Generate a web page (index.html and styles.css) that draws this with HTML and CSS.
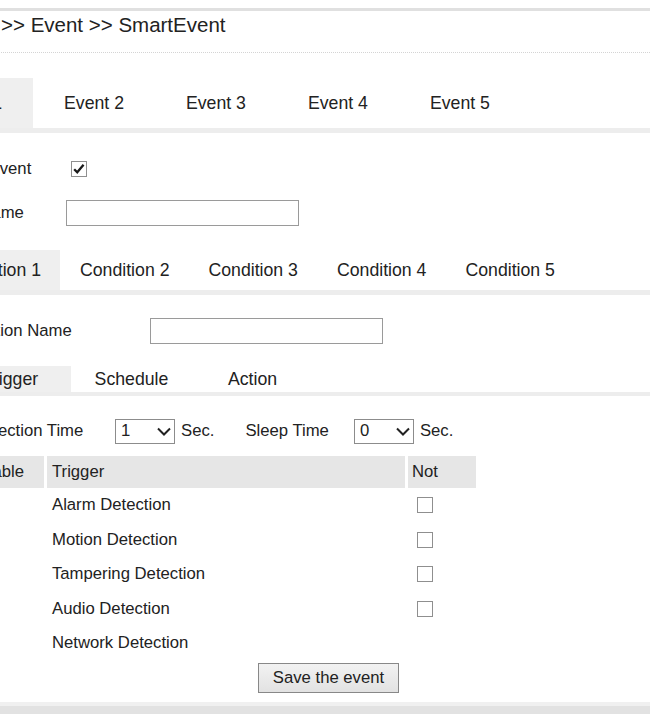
FILE: index.html
```html
<!DOCTYPE html>
<html>
<head>
<meta charset="utf-8">
<link rel="stylesheet" href="styles.css">
</head>
<body>
<div class="page">
  <div class="crumb">&gt;&gt; Event &gt;&gt; SmartEvent</div>

  <div class="tabs tabs-event">
    <span class="tab active">Event 1</span>
    <span class="tab">Event 2</span>
    <span class="tab">Event 3</span>
    <span class="tab">Event 4</span>
    <span class="tab">Event 5</span>
  </div>

  <div class="form form-event">
    <div class="row"><span class="lbl">Enable Event</span>
      <span class="cb cb-on"><svg viewBox="0 0 16 16" width="14" height="14"><path d="M2.5 8.2 L6 11.8 L13.2 3.2" fill="none" stroke="#1a1a1a" stroke-width="2.6"/></svg></span>
    </div>
    <div class="row"><span class="lbl">Event Name</span><span class="txt"></span></div>
  </div>

  <div class="tabs tabs-cond">
    <span class="tab active">Condition 1</span>
    <span class="tab">Condition 2</span>
    <span class="tab">Condition 3</span>
    <span class="tab">Condition 4</span>
    <span class="tab">Condition 5</span>
  </div>

  <div class="form form-cond">
    <div class="row"><span class="lbl">Condition Name</span><span class="txt"></span></div>
  </div>

  <div class="tabs tabs-trig">
    <span class="tab active">Trigger</span>
    <span class="tab">Schedule</span>
    <span class="tab">Action</span>
  </div>

  <div class="detect">
    <span class="lbl">Detection Time</span>
    <span class="sel"><span>1</span><svg viewBox="0 0 14 9" width="14" height="9"><path d="M1 1.5 L7 7.5 L13 1.5" fill="none" stroke="#222" stroke-width="2"/></svg></span>
    <span class="unit">Sec.</span>
    <span class="lbl2">Sleep Time</span>
    <span class="sel"><span>0</span><svg viewBox="0 0 14 9" width="14" height="9"><path d="M1 1.5 L7 7.5 L13 1.5" fill="none" stroke="#222" stroke-width="2"/></svg></span>
    <span class="unit">Sec.</span>
  </div>

  <table class="trig">
    <thead>
      <tr><th class="c1">Enable</th><th class="c2">Trigger</th><th class="c3">Not</th></tr>
    </thead>
    <tbody>
      <tr><td></td><td class="name">Alarm Detection</td><td class="not"><span class="cb"></span></td></tr>
      <tr><td></td><td class="name">Motion Detection</td><td class="not"><span class="cb"></span></td></tr>
      <tr><td></td><td class="name">Tampering Detection</td><td class="not"><span class="cb"></span></td></tr>
      <tr><td></td><td class="name">Audio Detection</td><td class="not"><span class="cb"></span></td></tr>
      <tr><td></td><td class="name">Network Detection</td><td class="not"></td></tr>
    </tbody>
  </table>

  <div class="actions"><span class="btn">Save the event</span></div>
  <div class="foot"></div>
</div>
</body>
</html>
```

FILE: styles.css
```css
html, body {
  margin: 0;
  padding: 0;
  background: #fff;
  overflow: hidden;
}
body {
  font-family: "Liberation Sans", Arial, sans-serif;
  color: #222;
  font-size: 16.7px;
}
.page {
  margin-left: -100px;
  width: 750px;
  padding-top: 8px;
}
.crumb {
  border-top: 3px solid #e0e0e0;
  border-bottom: 1px dotted #d4d4d4;
  height: 45px;
  box-sizing: border-box;
  padding: 1px 0 0 101px;
  font-size: 20.5px;
  line-height: 26px;
  color: #222;
}
.tabs {
  display: flex;
  border-bottom: 5px solid #ededed;
  font-size: 17.7px;
  color: #222;
}
.tab.active {
  background: #efefef;
}
.tabs-event {
  margin-top: 25px;
  padding-left: 11px;
  line-height: 50px;
}
.tabs-event .tab {
  padding: 0 31px;
}
.form-event {
  padding: 14px 0 0 32px;
}
.row {
  display: flex;
  align-items: center;
  height: 44px;
}
.form-event .lbl {
  width: 134px;
}
.cb {
  display: inline-flex;
  align-items: center;
  justify-content: center;
  width: 14px;
  height: 14px;
  border: 1px solid #8f8f8f;
  background: #fff;
}
.form-event .cb {
  margin-left: 5px;
}
.txt {
  display: block;
  width: 231px;
  height: 24px;
  border: 1px solid #9a9a9a;
  background: #fff;
}
.tabs-cond {
  margin-top: 15px;
  padding-left: 32px;
  line-height: 40px;
}
.tabs-cond .tab {
  padding: 0 19.5px;
}
.form-cond {
  padding: 16px 0 0 52px;
}
.form-cond .row {
  height: 40px;
}
.form-cond .lbl {
  width: 198px;
}
.tabs-trig {
  margin-top: 15px;
  padding-left: 50px;
  line-height: 26px;
  border-bottom-width: 4px;
}
.tabs-trig .tab {
  width: 121px;
  text-align: center;
}
.detect {
  display: flex;
  align-items: center;
  height: 36px;
  margin-top: 17px;
  padding-left: 72px;
}
.detect .lbl {
  width: 143px;
}
.sel {
  display: flex;
  align-items: center;
  justify-content: space-between;
  box-sizing: border-box;
  width: 60px;
  height: 25px;
  border: 1px solid #8c8c8c;
  padding: 0 3px 0 5px;
  background: #fff;
}
.unit {
  margin-left: 6px;
}
.lbl2 {
  margin-left: 31px;
  margin-right: 25px;
}
.trig {
  margin: 7px 0 0 64px;
  border-collapse: separate;
  border-spacing: 3px 0;
  font-size: 16.7px;
}
.trig th {
  background: #e6e6e6;
  font-weight: normal;
  text-align: left;
  height: 32px;
  padding: 0 5px;
  box-sizing: border-box;
  color: #222;
}
.trig .c1 { width: 77px; padding-left: 5px; }
.trig .c2 { width: 358px; }
.trig .c3 { width: 68px; padding-left: 4px; }
.trig td {
  height: 34.5px;
  padding: 0 5px;
}
.trig td.not {
  padding-left: 9px;
  vertical-align: middle;
}
.trig td.not .cb {
  display: block;
}
.actions {
  margin-top: 2px;
  padding-left: 358px;
}
.btn {
  display: inline-block;
  box-sizing: border-box;
  width: 141px;
  height: 30px;
  line-height: 28px;
  text-align: center;
  border: 1px solid #888;
  background: linear-gradient(#f2f2f2, #e2e2e2);
  color: #222;
}
.foot {
  margin-top: 9px;
  height: 4px;
  border-bottom: 8px solid #e2e2e2;
  background: #f0f0f0;
}
```
